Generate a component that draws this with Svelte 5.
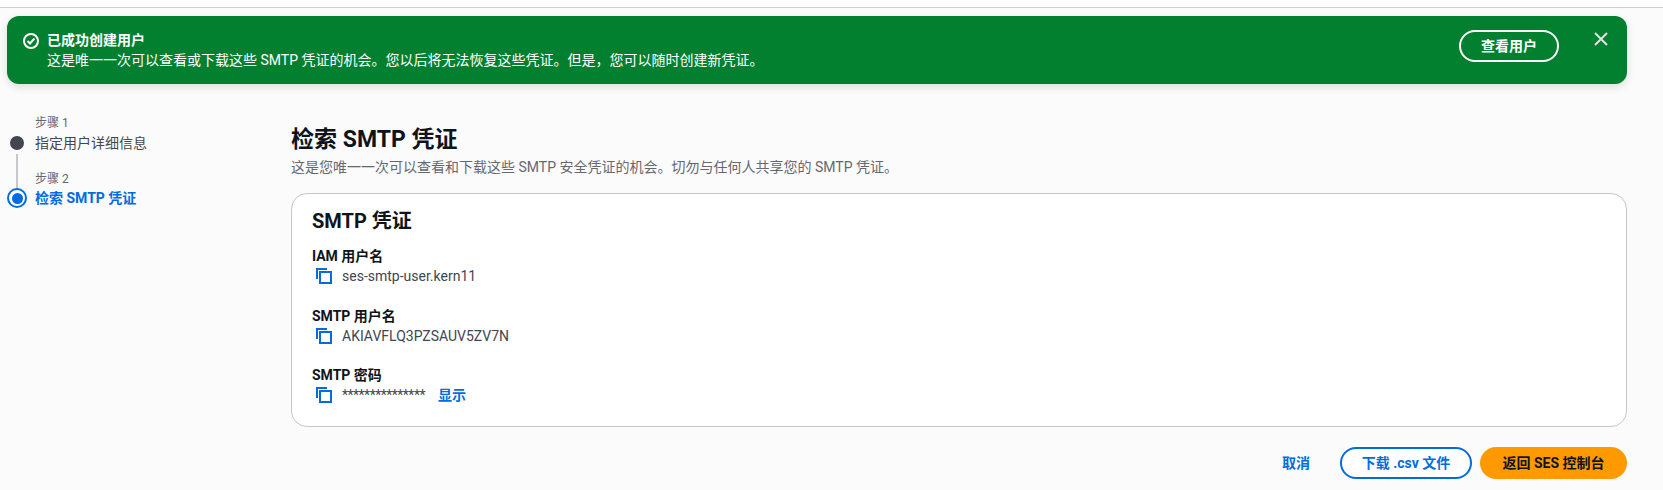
<script lang="ts">
  const fields = [
    { label: 'IAM 用户名', value: 'ses-smtp-user.kern11' },
    { label: 'SMTP 用户名', value: 'AKIAVFLQ3PZSAUV5ZV7N' },
    { label: 'SMTP 密码', value: '***************', secret: true },
  ]
</script>

<div class="page">
  <div class="topbar"></div>

  <div class="flash">
    <svg class="flash-icon" viewBox="0 0 16 16" width="16" height="16" fill="none" stroke="currentColor" stroke-width="2">
      <circle cx="8" cy="8" r="7"></circle>
      <path d="M4.5 8 7 10.5 11.5 5.5"></path>
    </svg>
    <div class="flash-text">
      <div class="flash-title">已成功创建用户</div>
      <div>这是唯一一次可以查看或下载这些 SMTP 凭证的机会。您以后将无法恢复这些凭证。但是，您可以随时创建新凭证。</div>
    </div>
    <button class="flash-btn">查看用户</button>
    <svg class="flash-close" viewBox="0 0 16 16" width="16" height="16" fill="none" stroke="currentColor" stroke-width="2">
      <path d="M2 2 14 14M14 2 2 14"></path>
    </svg>
  </div>

  <div class="layout">
    <nav class="steps">
      <div class="step">
        <div class="step-label">步骤 1</div>
        <div class="step-row">
          <span class="dot"></span>
          <span class="step-name">指定用户详细信息</span>
        </div>
      </div>
      <div class="connector"></div>
      <div class="step second">
        <div class="step-label">步骤 2</div>
        <div class="step-row">
          <span class="ring"><span></span></span>
          <span class="step-name active">检索 SMTP 凭证</span>
        </div>
      </div>
    </nav>

    <main class="content">
      <h1>检索 SMTP 凭证</h1>
      <p class="desc">这是您唯一一次可以查看和下载这些 SMTP 安全凭证的机会。切勿与任何人共享您的 SMTP 凭证。</p>

      <section class="card">
        <h2>SMTP 凭证</h2>
        {#each fields as field}
          <div class="field">
            <div class="field-label">{field.label}</div>
            <div class="field-value">
              <svg class="copy" viewBox="0 0 16 16" width="16" height="16" fill="none" stroke="currentColor" stroke-width="2">
                <rect x="4" y="4" width="11" height="11"></rect>
                <path d="M1 11V1H11"></path>
              </svg>
              <span class:masked={field.secret}>{field.value}</span>
              {#if field.secret}
                <a class="show" href="#show">显示</a>
              {/if}
            </div>
          </div>
        {/each}
      </section>

      <div class="actions">
        <button class="link">取消</button>
        <button class="normal">下载 .csv 文件</button>
        <button class="primary">返回 SES 控制台</button>
      </div>
    </main>
  </div>
</div>

<style>
  :global(body) {
    background: #fbfbfb;
  }

  .page {
    height: 490px;
    overflow: hidden;
    background: #fbfbfb;
    color: #0f141a;
    font-family: Roboto, "Noto Sans CJK SC", sans-serif;
    font-size: 14px;
    line-height: 20px;
  }

  .topbar {
    height: 7px;
    background: #fff;
    border-bottom: 1px solid #cfcfcf;
  }

  .flash {
    display: flex;
    align-items: flex-start;
    height: 68px;
    box-sizing: border-box;
    margin: 8px 36px 0 7px;
    padding: 14px 16px 0 16px;
    background: #037f30;
    color: #fff;
    border-radius: 12px;
    box-shadow: 0 3px 8px rgba(0, 7, 22, 0.12);
  }

  .flash-icon {
    flex: none;
    margin: 3px 8px 0 0;
  }

  .flash-text {
    flex: 1;
  }

  .flash-title {
    font-weight: 700;
  }

  .flash-btn {
    margin: 0 34px 0 0;
    width: 100px;
    height: 32px;
    background: transparent;
    border: 2px solid #fff;
    border-radius: 20px;
    color: #fff;
    font: inherit;
    font-weight: 700;
  }

  .flash-close {
    flex: none;
    margin: 1px 2px 0 0;
    color: #e3e3e3;
  }

  .layout {
    display: flex;
    margin: 22px 36px 0 7px;
  }

  .steps {
    flex: none;
    width: 284px;
    padding-top: 8px;
  }

  .step-label {
    margin-left: 28px;
    font-size: 12px;
    line-height: 18px;
    color: #656871;
  }

  .step-row {
    display: flex;
    align-items: center;
    gap: 8px;
    height: 22px;
    color: #424650;
  }

  .dot {
    width: 14px;
    height: 14px;
    margin-left: 3px;
    margin-right: 3px;
    border-radius: 50%;
    background: #424650;
  }

  .connector {
    width: 2px;
    height: 35px;
    margin: 0 0 -35px 9px;
    background: #c6c6cd;
  }

  .second {
    margin-top: 16px;
  }

  .second .step-row {
    margin-top: -1px;
  }

  .ring {
    display: flex;
    align-items: center;
    justify-content: center;
    width: 20px;
    height: 20px;
    box-sizing: border-box;
    border: 2px solid #006ce0;
    border-radius: 50%;
    background: #fff;
    position: relative;
  }

  .ring span {
    width: 11px;
    height: 11px;
    border-radius: 50%;
    background: #006ce0;
  }

  .step-name.active {
    color: #006ce0;
    font-weight: 700;
  }

  .content {
    flex: 1;
    min-width: 0;
  }

  h1 {
    margin: 0;
    padding-top: 19px;
    font-size: 23px;
    line-height: 30px;
    font-weight: 700;
  }

  .desc {
    margin: 2px 0 0;
    line-height: 20px;
    color: #656871;
  }

  .card {
    margin-top: 16px;
    height: 234px;
    box-sizing: border-box;
    padding: 14px 20px 0;
    background: #fff;
    border: 1px solid #c6c6cd;
    border-radius: 16px;
  }

  h2 {
    margin: 0 0 12px;
    font-size: 20px;
    line-height: 26px;
    font-weight: 700;
  }

  .field {
    height: 59.5px;
  }

  .field-label {
    font-weight: 700;
    line-height: 20px;
  }

  .field-value {
    display: flex;
    align-items: center;
    height: 20px;
    color: #424650;
  }

  .copy {
    flex: none;
    margin: 0 10px 0 4px;
    color: #006ce0;
  }

  .masked {
    letter-spacing: -0.5px;
  }

  .show {
    margin-left: 13px;
    color: #006ce0;
    font-weight: 700;
    text-decoration: none;
  }

  .actions {
    display: flex;
    justify-content: flex-end;
    align-items: center;
    gap: 8px;
    margin-top: 20px;
  }

  .actions button {
    height: 32px;
    border-radius: 20px;
    font: inherit;
    font-weight: 700;
    box-sizing: border-box;
  }

  .link {
    width: 80px;
    margin-right: -4px;
    background: none;
    border: none;
    color: #006ce0;
  }

  .normal {
    width: 132px;
    background: #fff;
    border: 2px solid #006ce0;
    color: #006ce0;
  }

  .primary {
    width: 147px;
    background: #ff9900;
    border: none;
    color: #0f141a;
  }
</style>
